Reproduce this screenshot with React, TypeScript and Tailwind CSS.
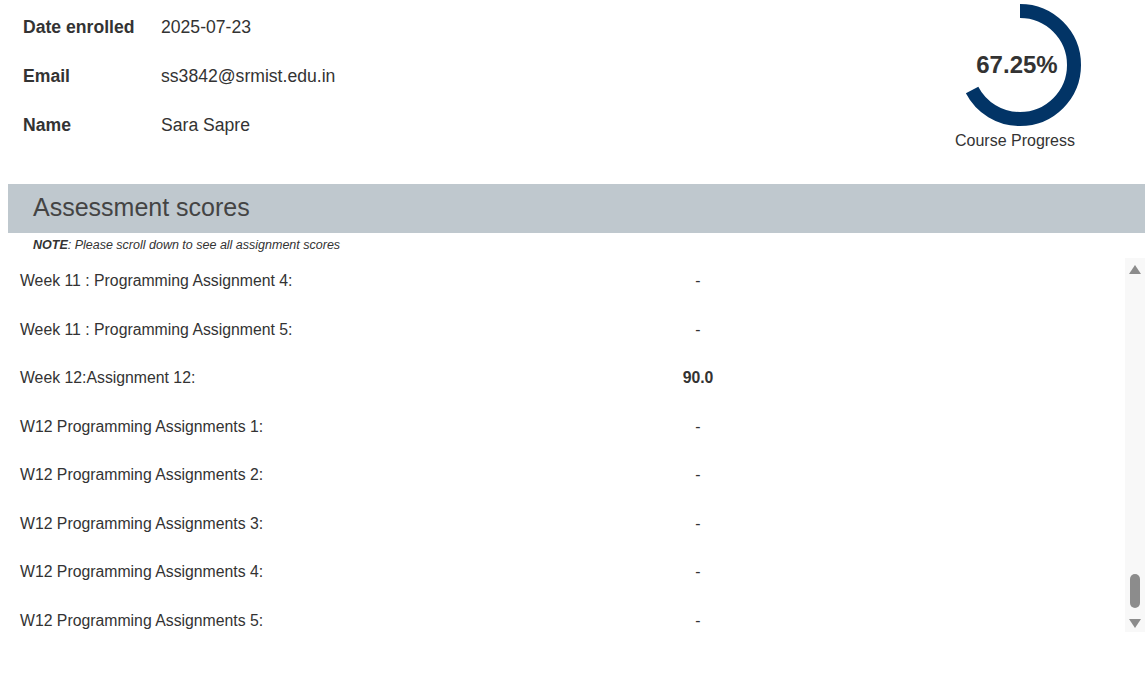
const info = [
  { label: "Date enrolled", value: "2025-07-23" },
  { label: "Email", value: "ss3842@srmist.edu.in" },
  { label: "Name", value: "Sara Sapre" },
];

const scores = [
  { title: "Week 11 : Programming Assignment 4:", score: "-" },
  { title: "Week 11 : Programming Assignment 5:", score: "-" },
  { title: "Week 12:Assignment 12:", score: "90.0" },
  { title: "W12 Programming Assignments 1:", score: "-" },
  { title: "W12 Programming Assignments 2:", score: "-" },
  { title: "W12 Programming Assignments 3:", score: "-" },
  { title: "W12 Programming Assignments 4:", score: "-" },
  { title: "W12 Programming Assignments 5:", score: "-" },
];

function ProgressRing({ value }: { value: number }) {
  const r = 54;
  const c = 2 * Math.PI * r;
  return (
    <div className="relative w-[124px] h-[124px]">
      <svg width="124" height="124" viewBox="0 0 124 124">
        <circle
          cx="62"
          cy="62"
          r={r}
          fill="none"
          stroke="#023466"
          strokeWidth="14"
          strokeDasharray={`${(value / 100) * c} ${c}`}
          transform="rotate(-90 62 62)"
        />
      </svg>
      <div className="absolute inset-0 flex items-center justify-center pr-[6px] text-[24px] font-bold text-[#333]">
        {value}%
      </div>
    </div>
  );
}

export default function App() {
  return (
    <div className="w-[1145px] h-[675px] bg-white text-[#333] font-['Liberation_Sans',Arial,sans-serif] overflow-hidden">
      <div className="flex justify-between h-[184px]">
        <div className="pl-[23px] pt-[3px]">
          {info.map((row) => (
            <div key={row.label} className="flex items-center h-[49px] text-[17.6px]">
              <span className="w-[138px] font-bold">{row.label}</span>
              <span>{row.value}</span>
            </div>
          ))}
        </div>
        <div className="flex flex-col items-center mr-[60px] pt-[3px]">
          <ProgressRing value={67.25} />
          <p className="mt-[5px] pr-[10px] text-[16px] leading-[18px]">Course Progress</p>
        </div>
      </div>

      <div className="ml-[8px] h-[49px] bg-[#bfc8ce] flex items-center pl-[25px] pb-[2px]">
        <h2 className="text-[25px] text-[#444]">Assessment scores</h2>
      </div>

      <p className="h-[24px] pt-[5px] pl-[33px] text-[12.5px] leading-[14px] italic text-[#333]">
        <span className="font-bold">NOTE</span>: Please scroll down to see all assignment scores
      </p>

      <div className="flex h-[375px]">
        <div className="flex-1 pl-[20px]">
          {scores.map((row) => (
            <div key={row.title} className="flex items-center h-[48.5px] text-[15.8px]">
              <span className="w-[620px]">{row.title}</span>
              <span className={`w-[116px] text-center ${row.score === "-" ? "" : "font-bold"}`}>
                {row.score}
              </span>
            </div>
          ))}
        </div>
        <div className="w-[20px] mt-px bg-[#f8f8f8] flex flex-col items-center pt-[7px] pb-[4px]">
          <svg width="12" height="9" viewBox="0 0 12 9">
            <path d="M6 0 L12 9 L0 9 Z" fill="#8c8c8c" />
          </svg>
          <div className="flex-1" />
          <div className="w-[10px] h-[34px] rounded-full bg-[#8c8c8c]" />
          <svg width="12" height="9" viewBox="0 0 12 9" className="mt-[11px]">
            <path d="M0 0 L12 0 L6 9 Z" fill="#8c8c8c" />
          </svg>
        </div>
      </div>
    </div>
  );
}
